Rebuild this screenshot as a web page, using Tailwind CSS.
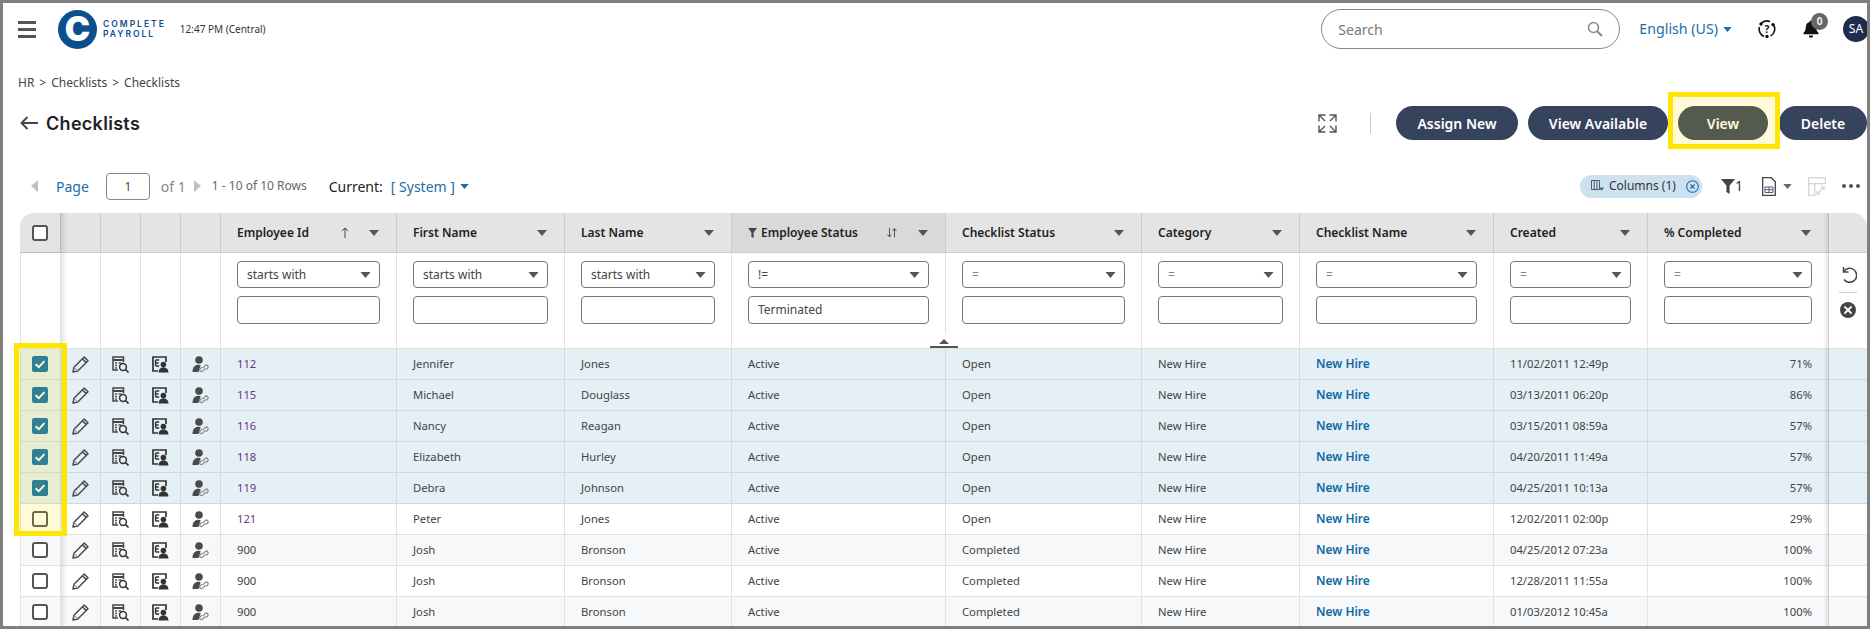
<!DOCTYPE html>
<html lang="en">
<head>
    <meta name="viewport" content="width=device-width, initial-scale=1.0">
    <title>Checklists</title>
    <script src="https://cdn.jsdelivr.net/npm/@tailwindcss/browser@4"></script>
</head>
<body class="bg-white text-[#333] font-['Noto_Sans',sans-serif]">

<!-- shared icons -->
<svg class="hidden">
    <symbol id="i-pencil" viewBox="0 0 17 17">
        <path d="M12.200 1 16 4.800 5.800 15 1 16 2 11.200Z M10.400 2.800 14.200 6.600" fill="none" stroke="#4a4a4a" stroke-width="1.500" stroke-linejoin="round"/>
        <path d="M2 11.200 5.800 15" fill="none" stroke="#888" stroke-width="1"/>
    </symbol>
    <symbol id="i-docsearch" viewBox="0 0 17 17">
        <path d="M11.500 6V1H1v13h5" fill="none" stroke="#444" stroke-width="1.500"/>
        <path d="M1 4h10.500" stroke="#444" stroke-width="2"/>
        <path d="M3 7h2M3 9.500h2M3 12h2M6.500 7h3" stroke="#555" stroke-width="1.400"/>
        <circle cx="11" cy="11" r="3.400" fill="none" stroke="#333" stroke-width="1.500"/>
        <path d="M13.500 13.500 16.500 16.500" stroke="#333" stroke-width="1.700"/>
    </symbol>
    <symbol id="i-docuser" viewBox="0 0 17 17">
        <path d="M14 6V1H1v14h5" fill="none" stroke="#333" stroke-width="1.700"/>
        <path d="M3.600 4h3.600M3.600 7h3M3.600 10h3.600M3.600 4v6" fill="none" stroke="#333" stroke-width="1.400"/>
        <circle cx="11.400" cy="8.600" r="2.800" fill="#333"/>
        <path d="M6.600 16.500c0-3.600 2-5 4.800-5s5 1.400 5 5Z" fill="#333"/>
    </symbol>
    <symbol id="i-userlink" viewBox="0 0 17 17">
        <circle cx="7" cy="4" r="3.800" fill="#4a4a4a"/>
        <path d="M.5 16c0-5 2.600-7.200 6-7.200 1 0 1.600.2 2.200.5L6.400 16Z" fill="#4a4a4a"/>
        <path d="M10.600 12.200l2.600-2.600a1.600 1.600 0 0 1 2.400 2.400l-1.600 1.600M13.400 12.400l-2.800 2.800a1.600 1.600 0 0 1-2.400-2.400l1.600-1.600" fill="none" stroke="#888" stroke-width="1.200"/>
    </symbol>
    <symbol id="i-caret" viewBox="0 0 10 6">
        <path d="M0 0h10L5 6Z" fill="currentColor"/>
    </symbol>
    <symbol id="i-check" viewBox="0 0 16 16">
        <rect width="16" height="16" rx="2" fill="#0a6fae"/>
        <path d="M3.600 8.200 6.800 11.200 12.400 5.200" fill="none" stroke="#fff" stroke-width="1.900"/>
    </symbol>
</svg>

<div class="relative h-[629px] border-[3px] border-[#808080] overflow-hidden flex flex-col">

    <!-- top bar -->
    <header class="h-[52px] shrink-0 flex items-center pl-[15px]">
        <button class="w-[18px] flex flex-col gap-[4px]">
            <span class="block h-[3px] bg-[#555]"></span>
            <span class="block h-[3px] bg-[#555]"></span>
            <span class="block h-[3px] bg-[#555]"></span>
        </button>
        <div class="ml-[22px] w-[39px] h-[39px] rounded-full bg-[#0b4f8e] flex items-center justify-center text-white font-['Inter',sans-serif] font-black text-[34px] leading-none">C</div>
        <div class="ml-[6px] font-['Inter',sans-serif] font-semibold text-[8.5px] leading-[10.5px] tracking-[2px] text-[#0b4f8e]">
            <div>COMPLETE</div>
            <div>PAYROLL</div>
        </div>
        <span class="ml-[14px] text-[10px] text-[#333]">12:47 PM (Central)</span>

        <div class="ml-auto w-[299px] h-[40px] rounded-full border border-[#888] flex items-center pl-[16px] pr-[16px]">
            <span class="text-[14px] text-[#777]">Search</span>
            <svg class="ml-auto" width="16" height="16" viewBox="0 0 16 16"><circle cx="6.500" cy="6.500" r="5" fill="none" stroke="#888" stroke-width="1.500"/><path d="M10.200 10.200 15 15" stroke="#888" stroke-width="2"/></svg>
        </div>
        <span class="ml-[19px] text-[14.2px] text-[#1a6fa8]">English (US)</span>
        <svg class="ml-[5px] text-[#1a6fa8]" width="9" height="5"><use href="#i-caret"/></svg>
        <svg class="ml-[26px]" width="18" height="18" viewBox="0 0 18 18">
            <path d="M3 3.600A8 8 0 0 1 12 1.600M15.600 5A8 8 0 0 1 12.600 16M6 16.400A8 8 0 0 1 1.400 7" fill="none" stroke="#111" stroke-width="1.600"/>
            <circle cx="3" cy="4" r="1.700" fill="#111"/><circle cx="15" cy="4.600" r="1.700" fill="#111"/><circle cx="9" cy="16.400" r="1.700" fill="#111"/>
            <text x="9" y="12.600" text-anchor="middle" font-size="10" font-weight="700" fill="#111" font-family="Noto Sans">?</text>
        </svg>
        <div class="relative ml-[27px] w-[16px] h-[18px]">
            <svg width="16" height="18" viewBox="0 0 16 18"><path d="M8 .5a1.400 1.400 0 0 1 1.400 1.400c2.600.6 3.800 2.600 3.800 5.200 0 3 .8 4.400 2.300 6v1.200H.5v-1.200c1.500-1.600 2.300-3 2.300-6 0-2.600 1.200-4.600 3.800-5.200A1.400 1.400 0 0 1 8 .5ZM5.800 15.600h4.400a2.200 2.200 0 0 1-4.400 0Z" fill="#111"/></svg>
            <span class="absolute left-[8px] top-[-7px] w-[17px] h-[17px] rounded-full bg-[#666] text-white text-[10px] font-semibold leading-[17px] text-center">0</span>
        </div>
        <span class="ml-[24px] mr-[-2px] w-[26px] h-[26px] shrink-0 rounded-full bg-[#1e2d4d] text-white text-[12px] leading-[26px] text-center">SA</span>
    </header>

    <!-- breadcrumb -->
    <nav class="mt-[16px] h-[24px] shrink-0 flex items-center pl-[15px] text-[12px] text-[#444]">
        <a href="#">HR</a><span class="mx-[5px]">&gt;</span><a href="#">Checklists</a><span class="mx-[5px]">&gt;</span><a href="#">Checklists</a>
    </nav>

    <!-- title + actions -->
    <div class="mt-[11px] h-[34px] shrink-0 flex items-center pl-[17px]">
        <svg width="18" height="14" viewBox="0 0 18 14"><path d="M18 7H2M7.500 1 1.500 7l6 6" fill="none" stroke="#444" stroke-width="1.900"/></svg>
        <h1 class="ml-[8px] font-['Inter',sans-serif] font-semibold text-[18px] tracking-[0.3px] text-[#222]">Checklists</h1>

        <svg class="ml-auto" width="19" height="19" viewBox="0 0 19 19"><path d="M7.500 1H1v6.500M1 1l6 6M11.500 1H18v6.500M18 1l-6 6M7.500 18H1v-6.500M1 18l6-6M11.500 18H18v-6.500M18 18l-6-6" fill="none" stroke="#555" stroke-width="1.400"/></svg>
        <span class="ml-[33px] w-px h-[21px] bg-[#ccc]"></span>
        <div class="ml-[25px] flex gap-[10px] text-white text-[14px] font-semibold">
            <button class="w-[122px] h-[34px] rounded-full bg-[#36435c]">Assign New</button>
            <button class="w-[140px] h-[34px] rounded-full bg-[#36435c]">View Available</button>
            <button class="w-[90px] h-[34px] rounded-full bg-[#36435c]">View</button>
            <button class="w-[88px] h-[34px] rounded-full bg-[#36435c] ml-px">Delete</button>
        </div>
    </div>

    <!-- pager + table tools -->
    <div class="mt-[32px] h-[28px] shrink-0 flex items-center pl-[28px]">
        <svg width="7" height="12" viewBox="0 0 7 12"><path d="M7 0v12L0 6Z" fill="#b9c2cc"/></svg>
        <span class="ml-[18px] text-[14px] text-[#1a6fa8]">Page</span>
        <input class="ml-[17px] w-[44px] h-[27px] border border-[#888] rounded-[4px] text-center text-[12px] text-[#444]" value="1">
        <span class="ml-[11px] w-[24px] overflow-hidden whitespace-nowrap text-[14px] text-[#888]">of 1</span>
        <svg class="ml-[9px]" width="7" height="12" viewBox="0 0 7 12"><path d="M0 0v12l7-6Z" fill="#b9c2cc"/></svg>
        <span class="ml-[11px] text-[12px] text-[#666]">1 - 10 of 10 Rows</span>
        <span class="ml-[22px] text-[14px] text-[#222]">Current:</span>
        <span class="ml-[8px] text-[14px] text-[#1a6fa8]">[ System ]</span>
        <svg class="ml-[5px] text-[#1a6fa8]" width="9" height="5"><use href="#i-caret"/></svg>

        <div class="ml-auto w-[122px] h-[23px] rounded-full bg-[#cde2ee] flex items-center pl-[11px]">
            <svg width="13" height="12" viewBox="0 0 13 12"><path d="M.5.500h8v9h-8ZM3.200.500v9M5.900.500v9" fill="none" stroke="#557" stroke-width="1"/><path d="M8 7.500h5l-2.500 3.500Z" fill="#2a6f96"/></svg>
            <span class="ml-[5px] text-[12px] text-[#333]">Columns (1)</span>
            <svg class="ml-[10px]" width="13" height="13" viewBox="0 0 13 13"><circle cx="6.500" cy="6.500" r="5.800" fill="none" stroke="#1a6fa8" stroke-width="1.100"/><path d="M4.500 4.500l4 4M8.500 4.500l-4 4" stroke="#1a6fa8" stroke-width="1.200"/></svg>
        </div>
        <svg class="ml-[19px]" width="14" height="15" viewBox="0 0 14 15"><path d="M0 0h14L8.600 6.500V15L5.400 13V6.500Z" fill="#444"/></svg>
        <span class="text-[14px] text-[#333] leading-none">1</span>
        <svg class="ml-[19px]" width="14" height="19" viewBox="0 0 14 19"><path d="M.7.700h8.600l4 4v13.600H.7Z" fill="#fff" stroke="#444" stroke-width="1.300"/><path d="M3 10h8v5.500H3ZM3 12.700h8M7 10v5.500" fill="none" stroke="#6a4a8a" stroke-width="1"/></svg>
        <svg class="ml-[7px] text-[#666]" width="9" height="5"><use href="#i-caret"/></svg>
        <svg class="ml-[16px]" width="18" height="19" viewBox="0 0 18 19"><path d="M.7.700h16.600v6H.7ZM.7 6.700v11.600h6V6.700M9 17l7-7M12 17h-3v-3M13 10h3v3" fill="none" stroke="#d3d3dc" stroke-width="1.300"/></svg>
        <span class="ml-[16px] mr-[7px] flex gap-[3px]">
            <i class="block w-[4px] h-[4px] rounded-full bg-[#555]"></i><i class="block w-[4px] h-[4px] rounded-full bg-[#555]"></i><i class="block w-[4px] h-[4px] rounded-full bg-[#555]"></i>
        </span>
    </div>

    <!-- grid -->
    <div class="relative ml-[17px] mt-[13px] w-[1847px] rounded-t-[14px] overflow-hidden">
        <table class="table-fixed border-separate border-spacing-0 w-[1847px] text-[11.25px] text-[#444]">
            <colgroup>
                <col class="w-[41px]"><col class="w-[40px]"><col class="w-[40px]"><col class="w-[40px]"><col class="w-[40px]">
                <col class="w-[176px]"><col class="w-[168px]"><col class="w-[167px]"><col class="w-[214px]"><col class="w-[196px]">
                <col class="w-[158px]"><col class="w-[194px]"><col class="w-[154px]"><col class="w-[181px]"><col class="w-[38px]">
            </colgroup>
            <thead>
                <tr id="head-row" class="h-[40px] bg-[#e4e4e4] text-[#222] text-left text-[12px]">
                    <th class="border-r border-b border-[#bbb]"><span class="block ml-[12px] w-[16px] h-[16px] border-2 border-[#555] rounded-[3px] bg-white"></span></th>
                    <th class="border-r border-b border-[#ccc]"></th><th class="border-r border-b border-[#ccc]"></th><th class="border-r border-b border-[#ccc]"></th><th class="border-r border-b border-[#ccc]"></th>
                    <th class="border-r border-b border-[#ccc] pl-[16px] pr-[17px] font-semibold"><div class="flex items-center">Employee Id
                        <svg class="ml-auto mr-[20px]" width="8" height="11" viewBox="0 0 8 11"><path d="M4 11V1M.8 4 4 1l3.200 3" fill="none" stroke="#444" stroke-width="1"/></svg>
                        <svg class="text-[#555]" width="10" height="6"><use href="#i-caret"/></svg></div></th>
                    <th class="border-r border-b border-[#ccc] pl-[16px] pr-[17px] font-semibold"><div class="flex items-center">First Name<svg class="ml-auto text-[#555]" width="10" height="6"><use href="#i-caret"/></svg></div></th>
                    <th class="border-r border-b border-[#ccc] pl-[16px] pr-[17px] font-semibold"><div class="flex items-center">Last Name<svg class="ml-auto text-[#555]" width="10" height="6"><use href="#i-caret"/></svg></div></th>
                    <th class="border-r border-b border-[#ccc] bg-[#d9d9d9] pl-[16px] pr-[17px] font-semibold"><div class="flex items-center">
                        <svg class="mr-[4px]" width="9" height="10" viewBox="0 0 9 10"><path d="M0 0h9L5.600 4.500V10L3.400 9V4.500Z" fill="#444"/></svg>Employee Status
                        <svg class="ml-auto mr-[21px]" width="10" height="10" viewBox="0 0 10 10"><path d="M2.500 0v9M.5 6.500l2 2.500 2-2.500M7.500 9.500V.5M5.500 3l2-2.500 2 2.500" fill="none" stroke="#555" stroke-width="1"/></svg>
                        <svg class="text-[#555]" width="10" height="6"><use href="#i-caret"/></svg></div></th>
                    <th class="border-r border-b border-[#ccc] pl-[16px] pr-[17px] font-semibold"><div class="flex items-center">Checklist Status<svg class="ml-auto text-[#555]" width="10" height="6"><use href="#i-caret"/></svg></div></th>
                    <th class="border-r border-b border-[#ccc] pl-[16px] pr-[17px] font-semibold"><div class="flex items-center">Category<svg class="ml-auto text-[#555]" width="10" height="6"><use href="#i-caret"/></svg></div></th>
                    <th class="border-r border-b border-[#ccc] pl-[16px] pr-[17px] font-semibold"><div class="flex items-center">Checklist Name<svg class="ml-auto text-[#555]" width="10" height="6"><use href="#i-caret"/></svg></div></th>
                    <th class="border-r border-b border-[#ccc] pl-[16px] pr-[17px] font-semibold"><div class="flex items-center">Created<svg class="ml-auto text-[#555]" width="10" height="6"><use href="#i-caret"/></svg></div></th>
                    <th class="border-r border-b border-[#ccc] pl-[16px] pr-[17px] font-semibold"><div class="flex items-center">% Completed<svg class="ml-auto text-[#555]" width="10" height="6"><use href="#i-caret"/></svg></div></th>
                    <th class="border-b border-[#ccc]"></th>
                </tr>
                <tr id="filter-row" class="h-[96px] bg-white align-top text-[12px]">
                    <td class="border-l border-r border-b border-[#e2e2e2]"></td>
                    <td class="border-r border-b border-[#e2e2e2]"></td><td class="border-r border-b border-[#e2e2e2]"></td><td class="border-r border-b border-[#e2e2e2]"></td><td class="border-r border-b border-[#e2e2e2]"></td>
                    <td class="border-r border-b border-[#e2e2e2] pl-[16px] pr-[16px] pt-[8px]">
                        <div class="h-[27px] border border-[#777] rounded-[4px] flex items-center pl-[9px] pr-[8px]">starts with<svg class="ml-auto text-[#555]" width="11" height="6"><use href="#i-caret"/></svg></div>
                        <div class="mt-[8px] h-[28px] border border-[#777] rounded-[4px]"></div>
                    </td>
                    <td class="border-r border-b border-[#e2e2e2] pl-[16px] pr-[16px] pt-[8px]">
                        <div class="h-[27px] border border-[#777] rounded-[4px] flex items-center pl-[9px] pr-[8px]">starts with<svg class="ml-auto text-[#555]" width="11" height="6"><use href="#i-caret"/></svg></div>
                        <div class="mt-[8px] h-[28px] border border-[#777] rounded-[4px]"></div>
                    </td>
                    <td class="border-r border-b border-[#e2e2e2] pl-[16px] pr-[16px] pt-[8px]">
                        <div class="h-[27px] border border-[#777] rounded-[4px] flex items-center pl-[9px] pr-[8px]">starts with<svg class="ml-auto text-[#555]" width="11" height="6"><use href="#i-caret"/></svg></div>
                        <div class="mt-[8px] h-[28px] border border-[#777] rounded-[4px]"></div>
                    </td>
                    <td class="border-r border-b border-[#e2e2e2] pl-[16px] pr-[16px] pt-[8px]">
                        <div class="h-[27px] border border-[#777] rounded-[4px] flex items-center pl-[9px] pr-[8px]">!=<svg class="ml-auto text-[#555]" width="11" height="6"><use href="#i-caret"/></svg></div>
                        <div class="mt-[8px] h-[28px] border border-[#777] rounded-[4px] flex items-center pl-[9px]">Terminated</div>
                    </td>
                    <td class="border-r border-b border-[#e2e2e2] pl-[16px] pr-[16px] pt-[8px]">
                        <div class="h-[27px] border border-[#777] rounded-[4px] flex items-center pl-[9px] pr-[8px] text-[#888]">=<svg class="ml-auto text-[#555]" width="11" height="6"><use href="#i-caret"/></svg></div>
                        <div class="mt-[8px] h-[28px] border border-[#777] rounded-[4px]"></div>
                    </td>
                    <td class="border-r border-b border-[#e2e2e2] pl-[16px] pr-[16px] pt-[8px]">
                        <div class="h-[27px] border border-[#777] rounded-[4px] flex items-center pl-[9px] pr-[8px] text-[#888]">=<svg class="ml-auto text-[#555]" width="11" height="6"><use href="#i-caret"/></svg></div>
                        <div class="mt-[8px] h-[28px] border border-[#777] rounded-[4px]"></div>
                    </td>
                    <td class="border-r border-b border-[#e2e2e2] pl-[16px] pr-[16px] pt-[8px]">
                        <div class="h-[27px] border border-[#777] rounded-[4px] flex items-center pl-[9px] pr-[8px] text-[#888]">=<svg class="ml-auto text-[#555]" width="11" height="6"><use href="#i-caret"/></svg></div>
                        <div class="mt-[8px] h-[28px] border border-[#777] rounded-[4px]"></div>
                    </td>
                    <td class="border-r border-b border-[#e2e2e2] pl-[16px] pr-[16px] pt-[8px]">
                        <div class="h-[27px] border border-[#777] rounded-[4px] flex items-center pl-[9px] pr-[8px] text-[#888]">=<svg class="ml-auto text-[#555]" width="11" height="6"><use href="#i-caret"/></svg></div>
                        <div class="mt-[8px] h-[28px] border border-[#777] rounded-[4px]"></div>
                    </td>
                    <td class="border-r border-b border-[#e2e2e2] pl-[16px] pr-[16px] pt-[8px]">
                        <div class="h-[27px] border border-[#777] rounded-[4px] flex items-center pl-[9px] pr-[8px] text-[#888]">=<svg class="ml-auto text-[#555]" width="11" height="6"><use href="#i-caret"/></svg></div>
                        <div class="mt-[8px] h-[28px] border border-[#777] rounded-[4px]"></div>
                    </td>
                    <td class="border-b border-[#e2e2e2] pt-[13px]">
                        <div class="flex flex-col items-center">
                            <svg width="17" height="17" viewBox="0 0 17 17"><path d="M3.500 1v5h5M3.500 6A7 7 0 1 1 4 13.500" fill="none" stroke="#444" stroke-width="1.500"/></svg>
                            <span class="mt-[9px] w-[18px] h-px bg-[#ccc]"></span>
                            <svg class="mt-[9px]" width="16" height="16" viewBox="0 0 16 16"><circle cx="8" cy="8" r="8" fill="#444"/><path d="M4.500 4.500l7 7M11.500 4.500l-7 7" stroke="#fff" stroke-width="1.800"/></svg>
                        </div>
                    </td>
                </tr>
            </thead>
            <tbody id="rows"></tbody>
        </table>
        <!-- frozen column shadows -->
        <div class="absolute left-[41px] top-0 bottom-0 w-[6px] bg-gradient-to-r from-black/10 to-transparent"></div>
        <div class="absolute right-[38px] top-0 bottom-0 w-[6px] bg-gradient-to-l from-black/10 to-transparent"></div>
        <!-- filter row collapse handle -->
        <div class="absolute left-[910px] top-[121px] w-[28px] h-[14px] bg-white flex flex-col items-center justify-end">
            <svg width="10" height="5" viewBox="0 0 10 5"><path d="M5 0l5 5H0Z" fill="#555"/></svg>
            <span class="mt-[2px] w-[28px] h-[2px] bg-[#555]"></span>
        </div>
    </div>

    <!-- yellow callouts -->
    <div class="absolute left-[1665px] top-[89px] w-[112px] h-[57px] border-[5px] border-[#ffe600] bg-[#ffe600]/15"></div>
    <div class="absolute left-[11px] top-[340px] w-[53px] h-[193px] border-[5px] border-[#ffe600] bg-[#ffe600]/15"></div>
</div>

<script>
    const data = [
        ["112", "Jennifer", "Jones", "Open", "11/02/2011 12:49p", "71%", "sel"],
        ["115", "Michael", "Douglass", "Open", "03/13/2011 06:20p", "86%", "sel"],
        ["116", "Nancy", "Reagan", "Open", "03/15/2011 08:59a", "57%", "sel"],
        ["118", "Elizabeth", "Hurley", "Open", "04/20/2011 11:49a", "57%", "sel"],
        ["119", "Debra", "Johnson", "Open", "04/25/2011 10:13a", "57%", "sel"],
        ["121", "Peter", "Jones", "Open", "12/02/2011 02:00p", "29%", "none"],
        ["900", "Josh", "Bronson", "Completed", "04/25/2012 07:23a", "100%", "alt"],
        ["900", "Josh", "Bronson", "Completed", "12/28/2011 11:55a", "100%", "none"],
        ["900", "Josh", "Bronson", "Completed", "01/03/2012 10:45a", "100%", "alt"]
    ];

    const rowBg = { sel: "bg-[#e4eff6]", alt: "bg-[#f6f8fa]", none: "bg-white" };
    const line = { sel: "border-[#cfd9e0]", alt: "border-[#e2e2e2]", none: "border-[#e2e2e2]" };

    document.getElementById("rows").innerHTML = data.map(([id, first, last, status, created, pct, kind]) => {
        const b = "border-r border-b " + line[kind];
        const text = b + " pl-[16px]";
        const box = kind === "sel"
            ? '<svg class="block ml-[11px]" width="16" height="16"><use href="#i-check"/></svg>'
            : '<span class="block ml-[11px] w-[16px] h-[16px] border-2 border-[#555] rounded-[3px] bg-white"></span>';
        const idColor = id === "900" ? "" : " text-[#6b3a78]";
        return `<tr class="h-[31px] ${rowBg[kind]}">
            <td class="border-l ${b}">${box}</td>
            <td class="${b}"><svg class="block mx-auto" width="17" height="17"><use href="#i-pencil"/></svg></td>
            <td class="${b}"><svg class="block mx-auto" width="17" height="17"><use href="#i-docsearch"/></svg></td>
            <td class="${b}"><svg class="block mx-auto" width="17" height="17"><use href="#i-docuser"/></svg></td>
            <td class="${b}"><svg class="block mx-auto" width="17" height="17"><use href="#i-userlink"/></svg></td>
            <td class="${text}${idColor}">${id}</td>
            <td class="${text}">${first}</td>
            <td class="${text}">${last}</td>
            <td class="${text}">Active</td>
            <td class="${text}">${status}</td>
            <td class="${text}">New Hire</td>
            <td class="${text} text-[12px] font-semibold text-[#0f6aa5]"><a href="#">New Hire</a></td>
            <td class="${text}">${created}</td>
            <td class="${b} text-right pr-[16px]">${pct}</td>
            <td class="border-b ${line[kind]}"></td>
        </tr>`;
    }).join("");
</script>
</body>
</html>
